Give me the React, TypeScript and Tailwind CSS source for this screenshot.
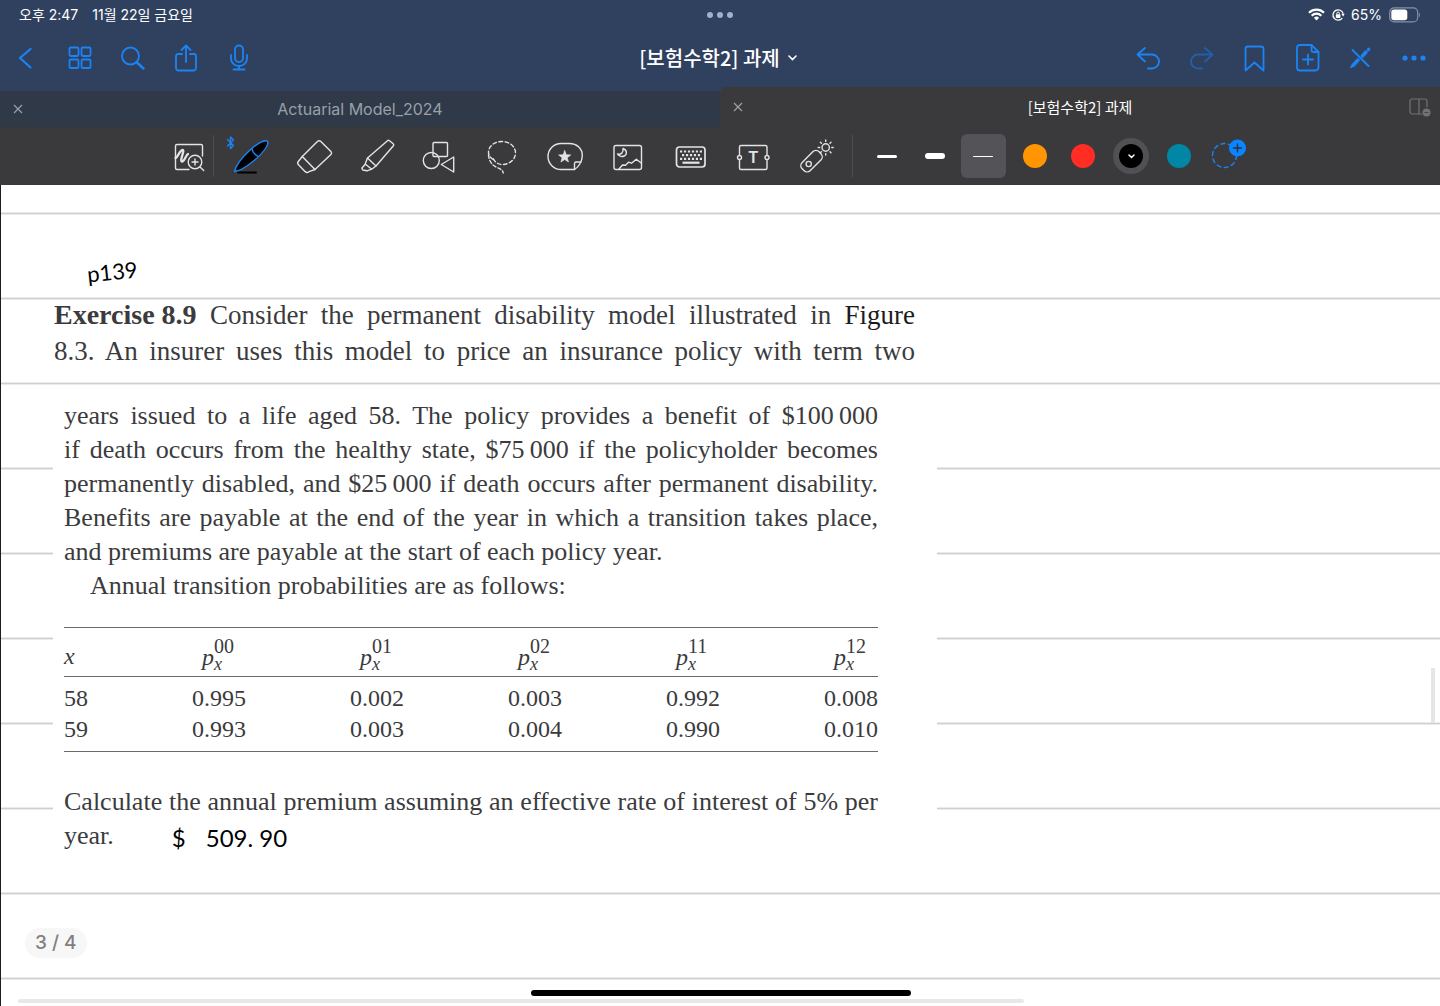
import React from "react";

const SANS = "font-[Inter,'Noto_Sans_CJK_KR',sans-serif]";
const KOREAN = "font-['Noto_Sans_CJK_KR',sans-serif]";
const SERIF = "font-['Liberation_Serif',serif]";
const INK = "font-[Lato,sans-serif]";

interface IconProps {
  children: React.ReactNode;
}

function Icon({ children }: IconProps) {
  return (
    <svg
      width="44"
      height="44"
      viewBox="0 0 44 44"
      fill="none"
      stroke="currentColor"
      strokeWidth={1.4}
      strokeLinecap="round"
      strokeLinejoin="round"
      className="shrink-0 overflow-visible"
      aria-hidden="true"
    >
      {children}
    </svg>
  );
}

interface NavButtonProps {
  label: string;
  disabled?: boolean;
  children: React.ReactNode;
}

function NavButton({ label, disabled, children }: NavButtonProps) {
  return (
    <button
      className="w-[53px] h-[58px] flex items-center justify-center text-[#1a84f5] disabled:text-[#215fa9]"
      aria-label={label}
      disabled={disabled}
    >
      <svg
        width="32"
        height="32"
        viewBox="0 0 32 32"
        fill="none"
        stroke="currentColor"
        strokeWidth={1.8}
        strokeLinecap="round"
        strokeLinejoin="round"
        aria-hidden="true"
      >
        {children}
      </svg>
    </button>
  );
}

function StatusBar() {
  return (
    <div className={`h-[29px] grid grid-cols-3 items-center pl-[19px] pr-5 text-white text-sm ${SANS}`}>
      <div className="flex gap-3.5">
        <span>오후 2:47</span>
        <span>11월 22일 금요일</span>
      </div>
      <div className="flex justify-center gap-1">
        <span className="size-1.5 rounded-full bg-[#9db0d3]" />
        <span className="size-1.5 rounded-full bg-[#9db0d3]" />
        <span className="size-1.5 rounded-full bg-[#9db0d3]" />
      </div>
      <div className="flex items-center justify-end gap-1.5">
        <svg width="17" height="13" viewBox="0 0 17 13" fill="none" stroke="currentColor" strokeWidth="2.2" aria-hidden="true">
          <path d="M1 4.8a10.6 10.6 0 0 1 15 0" />
          <path d="M3.7 7.7a6.8 6.8 0 0 1 9.6 0" />
          <path d="M8.5 12.4 5.9 9.7a3.7 3.7 0 0 1 5.2 0z" fill="currentColor" stroke="none" />
        </svg>
        <svg width="14" height="14" viewBox="0 0 14 14" fill="none" stroke="currentColor" strokeWidth="1.3" aria-hidden="true">
          <path d="M11.3 10.2a5.2 5.2 0 1 1 .9-4.6" />
          <path d="m10.3 5.8 3.4 0-1.5 2.6z" fill="currentColor" stroke="none" />
          <rect x="4.8" y="6.3" width="4.6" height="3.6" rx=".6" fill="currentColor" stroke="none" />
          <path d="M5.8 6.5V5.4a1.3 1.3 0 0 1 2.6 0v1.1" strokeWidth="1" />
        </svg>
        <span>65%</span>
        <svg width="32" height="16" viewBox="0 0 32 16" fill="none" aria-hidden="true">
          <rect x="1.7" y=".9" width="28" height="14" rx="4.5" stroke="#8492ac" strokeWidth="1.2" />
          <rect x="3.3" y="2.5" width="16" height="10.8" rx="2.8" fill="#fff" />
          <path d="M31 5.8c1.2.6 1.2 3.6 0 4.2z" fill="#8492ac" />
        </svg>
      </div>
    </div>
  );
}

function NavBar() {
  return (
    <div className="h-[58px] grid grid-cols-[1fr_auto_1fr] items-center">
      <div className="flex">
        <NavButton label="Back">
          <path d="M19.5 7 9 16l10.5 9.5" strokeWidth="2.2" />
        </NavButton>
        <NavButton label="Thumbnails">
          <rect x="5.5" y="5.5" width="9" height="8.5" rx="1.2" />
          <rect x="17.5" y="5.5" width="9" height="8.5" rx="1.2" />
          <rect x="5.5" y="17.5" width="9" height="8.5" rx="1.2" />
          <rect x="17.5" y="17.5" width="9" height="8.5" rx="1.2" />
        </NavButton>
        <NavButton label="Search">
          <circle cx="13.5" cy="14" r="8.5" />
          <path d="m20 20.5 6.5 6" strokeWidth="2.5" />
        </NavButton>
        <NavButton label="Share">
          <path d="M12 12H8a2 2 0 0 0-2 2v12a2.5 2.5 0 0 0 2.5 2.5h15A2.5 2.5 0 0 0 26 26V14a2 2 0 0 0-2-2h-4" />
          <path d="M16 20V3.500M11.5 8 16 3.5 20.5 8" />
        </NavButton>
        <NavButton label="Record">
          <rect x="12" y="3.5" width="8" height="16.5" rx="4" />
          <path d="M8 13v3.5a8 7.5 0 0 0 16 0V13M16 24v3.5M10.5 27.5h11" />
        </NavButton>
      </div>
      <button className={`flex items-center gap-2 pr-1 text-white text-xl font-medium ${KOREAN}`}>
        [보험수학2] 과제
        <svg width="9" height="6" viewBox="0 0 9 6" fill="none" stroke="currentColor" strokeWidth="1.6" strokeLinecap="round" aria-hidden="true">
          <path d="m1 1 3.5 3.5L8 1" />
        </svg>
      </button>
      <div className="flex justify-end">
        <NavButton label="Undo">
          <path d="M12 6 4.5 12.5 12 19.5M4.5 12.5H19a6.8 6.8 0 0 1 0 14h-4" />
        </NavButton>
        <NavButton label="Redo" disabled>
          <path d="m19 6 7.5 6.5L19 19.5M26.5 12.5H12a6.8 6.8 0 0 0 0 14h4" />
        </NavButton>
        <NavButton label="Bookmark">
          <path d="M6.5 28.5V7A2.5 2.5 0 0 1 9 4.5h13A2.5 2.5 0 0 1 24.5 7v21.5l-9-8z" />
        </NavButton>
        <NavButton label="Add page">
          <path d="M8 3h11.5l7 7v15.5a3 3 0 0 1-3 3H8a3 3 0 0 1-3-3V6a3 3 0 0 1 3-3z" />
          <path d="M19.5 3v5a2 2 0 0 0 2 2h5M16 12.5v10M11 17.5h10" />
        </NavButton>
        <NavButton label="Read only">
          <path d="m7.5 8 16 16" />
          <path d="m8 23.5 5-5.5M17.5 14l3.5-4" strokeWidth="3.5" />
          <path d="m23.5 7.5.3-.3" strokeWidth="3.2" />
          <path d="m5.8 25.5 2-3" strokeWidth="1.5" />
        </NavButton>
        <NavButton label="More">
          <g fill="currentColor" stroke="none">
            <circle cx="7" cy="16" r="2.6" />
            <circle cx="16" cy="16" r="2.6" />
            <circle cx="25" cy="16" r="2.6" />
          </g>
        </NavButton>
      </div>
    </div>
  );
}

function CloseIcon() {
  return (
    <svg width="10" height="10" viewBox="0 0 10 10" stroke="currentColor" strokeWidth="1.2" aria-hidden="true">
      <path d="m1 1 8 8M9 1 1 9" />
    </svg>
  );
}

function TabBar() {
  return (
    <div className="h-10 grid grid-cols-2">
      <div className="mt-1 grid grid-cols-[36px_1fr_36px] items-center bg-[#2f3948] text-[#98a0ab]">
        <button className="h-full flex items-center justify-center" aria-label="Close Actuarial Model_2024">
          <CloseIcon />
        </button>
        <button className={`text-base ${SANS}`}>Actuarial Model_2024</button>
      </div>
      <div className="grid grid-cols-[36px_1fr_36px] items-center bg-[#3a3a3c] rounded-tl-md text-[#a0a0a4]">
        <button className="h-full flex items-center justify-center" aria-label="Close [보험수학2] 과제">
          <CloseIcon />
        </button>
        <button className={`text-[15px] text-white ${KOREAN}`}>[보험수학2] 과제</button>
        <button className="flex items-center pl-1 text-[#727276]" aria-label="Split view">
          <svg width="24" height="20" viewBox="0 0 24 20" fill="none" stroke="currentColor" strokeWidth="1.2" aria-hidden="true">
            <path d="M14 17H4a2 2 0 0 1-2-2V4a2 2 0 0 1 2-2h13a2 2 0 0 1 2 2v6M11 2v15" />
            <circle cx="18.5" cy="15.5" r="4" fill="currentColor" stroke="none" />
            <path d="M16.5 15.5h4" stroke="#3a3a3c" strokeDasharray="1.2 .4" />
          </svg>
        </button>
      </div>
    </div>
  );
}

const sunRays = [0, 45, 90, 135, 180, 225, 270, 315];

const tools = [
  {
    label: "Pen",
    icon: (
      <Icon>
        <path d="M9 38.5h18" stroke="#000" strokeWidth="1.8" />
        <path d="M5.5 37.5C7 31.5 13 23.500 20.5 16.500c6-5.500 13-10 17-9.700 2.300.3 1.300 4-.7 7.200-3.500 5.500-9.500 11-15.500 15.500C15 34.500 10 37 5.500 37.500z" fill="#000" stroke="#1a84f5" />
        <path d="M23 14.5c.5 4 2.300 6 6 7.800" stroke="#1a84f5" />
        <path d="m-1.5 5.5 6 6-3 3V3l3 3-6 6" stroke="#1a84f5" />
      </Icon>
    ),
  },
  {
    label: "Eraser",
    icon: (
      <Icon>
        <path d="M25.7 7.3a2 2 0 0 1 2.9 0l10.3 10.2a2 2 0 0 1 0 2.9L23 35.5 10.3 22.5z" />
        <path d="m10.3 22.5-4 5a2.5 2.5 0 0 0 .2 3.3l6.5 6.7a3 3 0 0 0 4 .2l6-2.2" />
      </Icon>
    ),
  },
  {
    label: "Highlighter",
    icon: (
      <Icon>
        <path d="M32.5 6.8a1.5 1.5 0 0 1 2 0l3.7 3a1.5 1.5 0 0 1 .2 2L21 32l-8.5-8z" />
        <path d="m12.5 24-2.3 6 6.5 5.2L21 32M10.2 30.3l-3.4 3.9 1 1.8 4.2.8 4.7-1.6" />
      </Icon>
    ),
  },
  {
    label: "Shapes",
    icon: (
      <Icon>
        <rect x="16" y="8.5" width="14.5" height="14" rx="1" />
        <circle cx="14.3" cy="26.5" r="8" />
        <path d="M24.3 30.5 36.7 23v15z" />
      </Icon>
    ),
  },
  {
    label: "Lasso",
    icon: (
      <Icon>
        <path d="M13 25.5c-2.7-2-4.5-4.3-4.5-7C8.5 12 14.5 7.5 22 7.5S35.5 12.5 35.5 19 29.5 30.5 22 30.5c-4 0-7.5-2.5-9.5-7.5" strokeDasharray="3.6 2.6" />
        <path d="M8.5 21c.5 6 3.5 10 7.5 12 3.500 1.500 7 3 7.200 6" strokeDasharray="3.4 2.2" />
      </Icon>
    ),
  },
  {
    label: "Sticker",
    icon: (
      <Icon>
        <path d="M31.5 35.5H18A13 13 0 0 1 18 9.5h8.3c8 0 13 5.5 13 12 0 3.5-1 6-2.5 8.5-1.3 2.3-3 4-5.3 5.5z" />
        <path d="M31.5 35.5v-6a1.5 1.5 0 0 1 1.5-1.5h5" />
        <path d="m21.7 16.5 1.6 4.2 4.5.2-3.5 2.8 1.2 4.3-3.8-2.4-3.8 2.4 1.2-4.3-3.5-2.8 4.5-.2z" fill="currentColor" strokeWidth=".6" />
      </Icon>
    ),
  },
  {
    label: "Image",
    icon: (
      <Icon>
        <rect x="8" y="11.5" width="27.5" height="24" rx="2" />
        <path d="M17 14.5c4 1.2 4.5 6 1.2 7.5-2.7 1.2-5.7 0-6.7-2 3.5 1 6.2-1.5 5.5-5.5z" />
        <path d="m13 35 3.5-4 3 .2 3-3 3 1 4.8-4 5.2 4" />
      </Icon>
    ),
  },
  {
    label: "Keyboard",
    icon: (
      <Icon>
        <rect x="8.500" y="13" width="28.500" height="20" rx="3" strokeWidth="1.700" />
        <g strokeWidth="2.2" strokeLinecap="butt">
          <path d="M12 17.5h22" strokeDasharray="2.2 1.76" />
          <path d="M14 21.2h18.5" strokeDasharray="2.2 1.76" />
          <path d="M12 24.9h22" strokeDasharray="2.2 1.76" />
          <path d="M14.5 28.7h17" />
        </g>
      </Icon>
    ),
  },
  {
    label: "Text",
    icon: (
      <Icon>
        <path d="M8.5 20.5V13a1.5 1.5 0 0 1 1.5-1.5h24.5A1.5 1.5 0 0 1 36 13v7.5M36 26.5V34a1.5 1.5 0 0 1-1.5 1.5H10A1.5 1.5 0 0 1 8.5 34v-7.5" />
        <circle cx="8.5" cy="23.5" r="2" />
        <circle cx="36" cy="23.5" r="2" />
        <text x="22.2" y="29.3" textAnchor="middle" fontSize="16" fontWeight="600" fill="currentColor" stroke="none" className="font-[Inter,sans-serif]">
          T
        </text>
      </Icon>
    ),
  },
  {
    label: "Laser pointer",
    icon: (
      <Icon>
        <rect x="5.5" y="21.5" width="24" height="11.5" rx="4.5" transform="rotate(-45 17.5 27.2)" />
        <circle cx="14.7" cy="30" r="2.6" />
        <circle cx="31.700" cy="13.500" r="3.700" />
        {sunRays.map((angle) => (
          <path key={angle} d="M31.7 7.4V6" transform={`rotate(${angle} 31.7 13.5)`} />
        ))}
      </Icon>
    ),
  },
];

const strokes = [
  { label: "Medium stroke", bar: "h-[3px]", selected: false },
  { label: "Thick stroke", bar: "h-1.5", selected: false },
  { label: "Thin stroke", bar: "h-px", selected: true },
];

const colors = [
  { label: "Orange", fill: "bg-[#ff9500]", selected: false },
  { label: "Red", fill: "bg-[#ff2d23]", selected: false },
  { label: "Black", fill: "bg-black", selected: true },
  { label: "Teal", fill: "bg-[#0087a5]", selected: false },
];

function Toolbar() {
  return (
    <div className="h-[58px] flex items-center bg-[#3a3a3c] text-[#e4e4e6] pl-[164px]">
      <button className="w-[50px] h-[42px] flex items-center justify-center border-r border-[#4c4c50]" aria-label="Zoom window">
        <Icon>
          <path d="M22 35.5H10A1.5 1.5 0 0 1 8.5 34V12a1.5 1.5 0 0 1 1.5-1.5h24A1.5 1.5 0 0 1 35.5 12v10" />
          <path d="M8.5 24c2 0 4-7.5 7-8 3 0-4 12 0 11.5 2.5-.5 3-6 5.5-7.5" strokeWidth="2.3" />
          <circle cx="28" cy="28" r="6.8" />
          <path d="m33 33 3.7 3.5M28 25v6M25 28h6" />
        </Icon>
      </button>
      <div className="w-[627px] ml-1.5 grid grid-cols-10">
        {tools.map((tool) => (
          <button key={tool.label} className="h-11 flex items-center justify-center" aria-label={tool.label}>
            {tool.icon}
          </button>
        ))}
      </div>
      <div className="w-px h-[42px] ml-[5px] mr-2.5 bg-[#4c4c50]" />
      <div className="flex gap-1">
        <div className="flex">
          {strokes.map((s) => (
            <button key={s.label} className="w-12 h-11 flex items-center justify-center" aria-label={s.label} aria-pressed={s.selected}>
              <span className={`w-[45px] h-full flex items-center justify-center rounded-md ${s.selected ? "bg-[#545458]" : ""}`}>
                <span className={`w-5 rounded-full bg-white ${s.bar}`} />
              </span>
            </button>
          ))}
        </div>
        <div className="flex">
          {colors.map((c) => (
            <button key={c.label} className="w-12 h-11 flex items-center justify-center" aria-label={c.label} aria-pressed={c.selected}>
              <span className={`size-6 rounded-full flex items-center justify-center ${c.fill} ${c.selected ? "ring-6 ring-[#515155]" : ""}`}>
                {c.selected && (
                  <svg width="7" height="5" viewBox="0 0 7 5" fill="none" stroke="#fff" strokeWidth="1.5" strokeLinecap="round" aria-hidden="true">
                    <path d="m1 1 2.5 2.5L6 1" />
                  </svg>
                )}
              </span>
            </button>
          ))}
          <button className="w-12 h-11 flex items-center justify-center" aria-label="Add color">
            <Icon>
              <circle cx="19.5" cy="21.5" r="12" stroke="#1a84f5" strokeDasharray="4 3.5" />
              <circle cx="32.5" cy="14" r="8.5" fill="#0a84ff" stroke="none" />
              <path d="M32.5 10v8M28.5 14h8" stroke="#25323f" />
            </Icon>
          </button>
        </div>
      </div>
    </div>
  );
}

const columns = ["00", "01", "02", "11", "12"];

const rows = [
  { age: "58", values: ["0.995", "0.002", "0.003", "0.992", "0.008"] },
  { age: "59", values: ["0.993", "0.003", "0.004", "0.990", "0.010"] },
];

function ProbabilityTable() {
  return (
    <table className="w-full mt-6 table-fixed border-y border-[#6a6a6a] text-2xl text-left">
      <colgroup>
        <col className="w-[128px]" />
        <col />
        <col />
        <col />
        <col />
        <col className="w-[54px]" />
      </colgroup>
      <thead>
        <tr className="h-[49px] border-b border-[#6a6a6a]">
          <th className="p-0 pt-2 font-normal italic leading-8">x</th>
          {columns.map((c) => (
            <th key={c} className="p-0 pl-2.5 font-normal leading-8">
              <span className="flex items-center pt-1.5">
                <i className="pt-1">p</i>
                <span className="flex flex-col text-xl leading-[18px]">
                  <span>{c}</span>
                  <i className="text-lg leading-[18px]">x</i>
                </span>
              </span>
            </th>
          ))}
        </tr>
      </thead>
      <tbody className="leading-[31px] before:block before:h-1.5 after:block after:h-1.5">
        {rows.map((row) => (
          <tr key={row.age}>
            <td className="p-0">{row.age}</td>
            {row.values.map((value, i) => (
              <td key={i} className="p-0">{value}</td>
            ))}
          </tr>
        ))}
      </tbody>
    </table>
  );
}

function Line({ children }: { children: React.ReactNode }) {
  return <span className="block whitespace-nowrap [text-align-last:justify]">{children}</span>;
}

function NotePage() {
  return (
    <main className="relative flex-1 flex flex-col items-start border-l border-[#1c1c1e] pt-28 bg-white bg-[linear-gradient(transparent_82px,#ebebed_82px_83px,#cfcfd1_83px_84px,#ebebed_84px)] bg-[length:100%_85px] bg-[position:0_30px]">
      <p className={`absolute left-[86px] top-[69px] text-[22px] leading-9 text-black -rotate-6 ${INK}`}>p139</p>

      <p className={`w-[861px] ml-[53px] text-[27px] leading-9 text-[#3b3b3d] ${SERIF}`}>
        <Line>
          <b className="inline-block text-[28px] leading-9">Exercise 8.9</b> Consider the permanent disability model illustrated in{" "}
          <span className="text-[#1c1c1e]">Figure</span>
        </Line>
        <Line>8.3. An insurer uses this model to price an insurance policy with term two</Line>
      </p>

      {/* Pasted clipping hides the ruled lines behind it */}
      <section className={`w-[884px] mt-[18px] ml-[52px] pt-3 pb-8 pl-[11px] pr-[59px] bg-white text-[26px] leading-[34px] text-[#3b3b3d] ${SERIF}`}>
        <p>
          <Line>years issued to a life aged 58. The policy provides a benefit of $100&thinsp;000</Line>
          <Line>if death occurs from the healthy state, $75&thinsp;000 if the policyholder becomes</Line>
          <Line>permanently disabled, and $25&thinsp;000 if death occurs after permanent disability.</Line>
          <Line>Benefits are payable at the end of the year in which a transition takes place,</Line>
          and premiums are payable at the start of each policy year.
        </p>
        <p className="pl-[26px]">Annual transition probabilities are as follows:</p>
        <ProbabilityTable />
        <p className="mt-[33px]">
          <Line>Calculate the annual premium assuming an effective rate of interest of 5% per</Line>
        </p>
        <div className="flex gap-[58px]">
          <p>year.</p>
          <div className={`flex gap-5 pt-1 text-2xl leading-[30px] text-black ${INK}`}>
            <span>$</span>
            <span>509. 90</span>
          </div>
        </div>
      </section>

      <div className={`mt-[43px] ml-6 px-2.5 rounded-2xl bg-[#f7f7f7] text-[19px] leading-[30px] font-medium text-[#808082] ${SANS}`}>
        3 / 4
      </div>

      {/* Scroll bars and home indicator */}
      <div className="absolute right-[5px] top-[483px] w-1 h-[55px] bg-[#e6e6e8]" />
      <div className="absolute left-[17px] right-[416px] bottom-[3px] h-1 rounded-full bg-[#e8e8e8]" />
      <div className="absolute left-1/2 bottom-2.5 -translate-x-1/2 w-[380px] h-1.5 rounded-full bg-black" />
    </main>
  );
}

export default function App() {
  return (
    <div className="min-h-screen flex flex-col">
      <header className="bg-[#30415f]">
        <StatusBar />
        <NavBar />
        <TabBar />
        <Toolbar />
      </header>
      <NotePage />
    </div>
  );
}
